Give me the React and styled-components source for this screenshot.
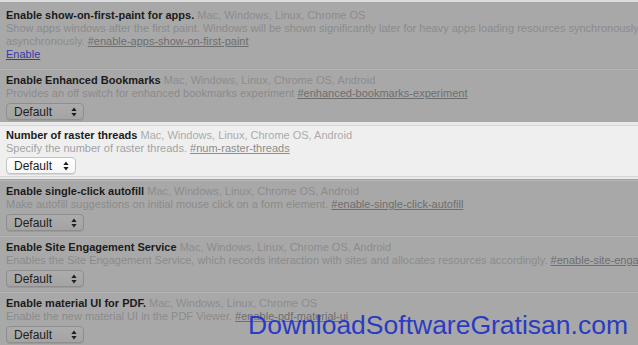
import React from 'react';
import styled, { createGlobalStyle, css } from 'styled-components';

const GlobalStyle = createGlobalStyle`
    html, body {
        margin: 0;
        padding: 0;
        background: #a8a8a8;
    }
`;

const experiments = [
    {
        title: 'Enable Enhanced Bookmarks',
        platforms: 'Mac, Windows, Linux, Chrome OS, Android',
        desc: 'Provides an off switch for enhanced bookmarks experiment',
        hash: '#enhanced-bookmarks-experiment',
    },
    {
        title: 'Number of raster threads',
        platforms: 'Mac, Windows, Linux, Chrome OS, Android',
        desc: 'Specify the number of raster threads.',
        hash: '#num-raster-threads',
        active: true,
    },
    {
        title: 'Enable single-click autofill',
        platforms: 'Mac, Windows, Linux, Chrome OS, Android',
        desc: 'Make autofill suggestions on initial mouse click on a form element.',
        hash: '#enable-single-click-autofill',
    },
    {
        title: 'Enable Site Engagement Service',
        platforms: 'Mac, Windows, Linux, Chrome OS, Android',
        desc: 'Enables the Site Engagement Service, which records interaction with sites and allocates resources accordingly.',
        hash: '#enable-site-engagement-service',
    },
    {
        title: 'Enable material UI for PDF.',
        platforms: 'Mac, Windows, Linux, Chrome OS',
        desc: 'Enable the new material UI in the PDF Viewer.',
        hash: '#enable-pdf-material-ui',
    },
];

const Arrows = () => (
    <svg width='6' height='10' viewBox='0 0 6 10'>
        <path d='M3 0.5 L5.6 4 L0.4 4 Z' fill='#1e1e1e' />
        <path d='M3 9.5 L5.6 6 L0.4 6 Z' fill='#1e1e1e' />
    </svg>
);

const Experiment = ({ title, platforms, desc, hash, active }) => (
    <Row $active={active}>
        <TitleLine>
            <Title>{title}</Title> <Platforms $active={active}>{platforms}</Platforms>
        </TitleLine>
        <Desc $active={active}>
            {desc} <HashLink $active={active}>{hash}</HashLink>
        </Desc>
        <SelectBox $active={active}>
            <span>Default</span>
            <Arrows />
        </SelectBox>
    </Row>
);

export default function App() {
    return (
        <Page>
            <GlobalStyle />
            <FirstRow>
                <TitleLine>
                    <Title>Enable show-on-first-paint for apps.</Title>{' '}
                    <Platforms>Mac, Windows, Linux, Chrome OS</Platforms>
                </TitleLine>
                <Desc>
                    Show apps windows after the first paint. Windows will be shown significantly later for heavy apps
                    loading resources synchronously
                </Desc>
                <Desc>
                    asynchronously. <HashLink>#enable-apps-show-on-first-paint</HashLink>
                </Desc>
                <EnableLink>Enable</EnableLink>
            </FirstRow>
            {experiments.map((e) => (
                <Experiment key={e.hash} {...e} />
            ))}
            <Watermark>DownloadSoftwareGratisan.com</Watermark>
        </Page>
    );
}

// styled components
const Page = styled.div`
    position: relative;
    width: 638px;
    height: 345px;
    overflow: hidden;
    background: #a8a8a8;
    font-family: 'Liberation Sans', Arial, sans-serif;
    font-size: 11px;
`;

const FirstRow = styled.section`
    border-top: 2px solid #dcdcdc;
    padding: 7px 6px 8px;
`;

const Row = styled.section`
    border-top: 1px solid #b6b6b6;
    box-shadow: 0 -1px 0 #a0a0a0;
    padding: 4px 6px 5px;

    ${(props) =>
        props.$active &&
        css`
            background: #efefef;
            border-top: 1px solid #d6d6d6;
            border-bottom: 3px solid #e9e9e9;
            box-shadow: 0 -3px 0 #e9e9e9, inset 0 -1px 0 #d6d6d6;
            padding: 3px 6px 3px;
        `}
`;

const TitleLine = styled.div`
    line-height: 13px;
    white-space: nowrap;
`;

const Title = styled.span`
    font-weight: bold;
    color: #1b1b1b;
`;

const Platforms = styled.span`
    color: ${(props) => (props.$active ? '#ababab' : '#8c8c8c')};
`;

const Desc = styled.div`
    line-height: 13px;
    white-space: nowrap;
    color: ${(props) => (props.$active ? '#a3a3a3' : '#8b8b8b')};
`;

const HashLink = styled.span`
    text-decoration: underline;
    color: ${(props) => (props.$active ? '#8c8c8c' : '#6e6e6e')};
`;

const EnableLink = styled.div`
    line-height: 13px;
    color: #3a3aa6;
    text-decoration: underline;
`;

const SelectBox = styled.div`
    margin-top: ${(props) => (props.$active ? '2px' : '3px')};
    box-sizing: border-box;
    height: 17px;
    width: ${(props) => (props.$active ? '70px' : '78px')};
    display: flex;
    align-items: center;
    justify-content: space-between;
    padding: 0 6px 0 7px;
    border: 1px solid ${(props) => (props.$active ? '#c3c3c3' : '#8e8e8e')};
    border-radius: 4px;
    background: ${(props) => (props.$active ? 'linear-gradient(#ffffff, #f6f6f6)' : 'linear-gradient(#acacac, #a4a4a4)')};
    box-shadow: 0 1px 0 ${(props) => (props.$active ? '#d8d8d8' : '#9a9a9a')};
    font-size: 12px;
    color: #1e1e1e;
`;

const Watermark = styled.div`
    position: absolute;
    left: 248px;
    top: 312px;
    font-size: 26.5px;
    line-height: 1;
    color: #2a3bc4;
    white-space: nowrap;
`;
